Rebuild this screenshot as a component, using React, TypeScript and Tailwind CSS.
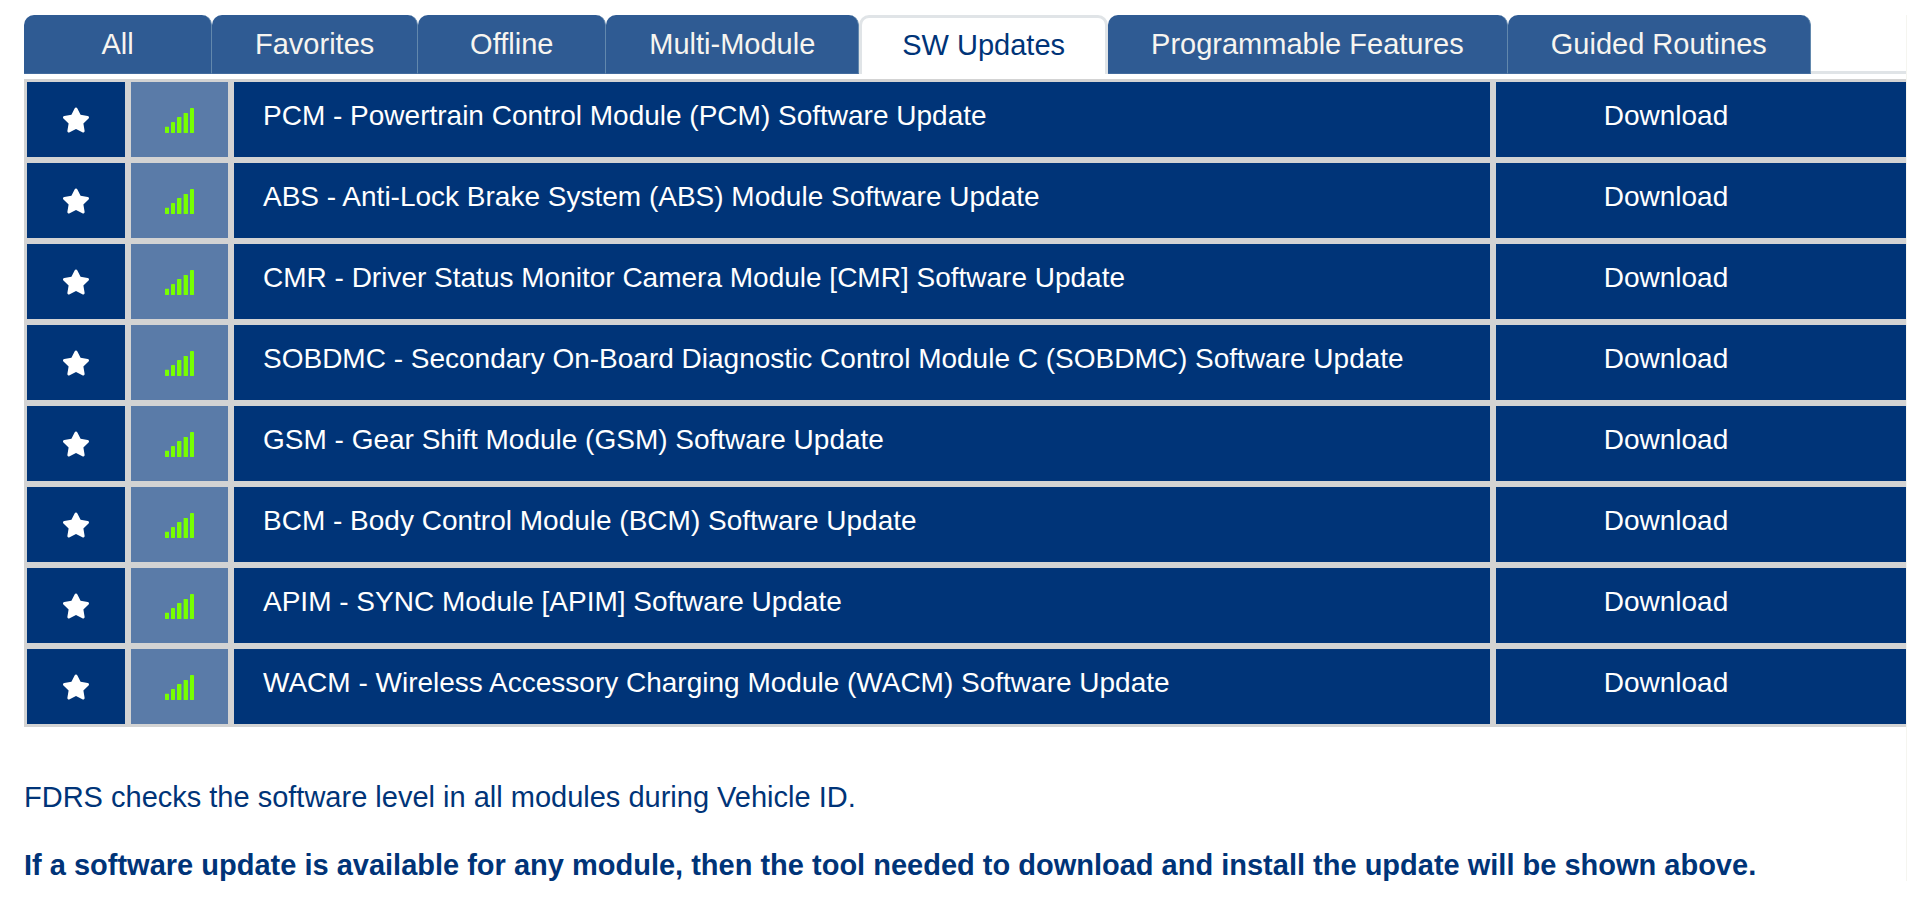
import { useState } from 'react';
import { FaStar } from 'react-icons/fa';

const tabs = [
  'All',
  'Favorites',
  'Offline',
  'Multi-Module',
  'SW Updates',
  'Programmable Features',
  'Guided Routines',
];

const updates = [
  'PCM - Powertrain Control Module (PCM) Software Update',
  'ABS - Anti-Lock Brake System (ABS) Module Software Update',
  'CMR - Driver Status Monitor Camera Module [CMR] Software Update',
  'SOBDMC - Secondary On-Board Diagnostic Control Module C (SOBDMC) Software Update',
  'GSM - Gear Shift Module (GSM) Software Update',
  'BCM - Body Control Module (BCM) Software Update',
  'APIM - SYNC Module [APIM] Software Update',
  'WACM - Wireless Accessory Charging Module (WACM) Software Update',
];

// Five rising bars, network required
function SignalIcon() {
  return (
    <svg width="29" height="25" viewBox="0 0 29 25" fill="#77ff00" className="mx-auto block">
      <rect x="0" y="18.7" width="4" height="6.3" rx="0.4" />
      <rect x="6" y="14" width="4" height="11" rx="0.4" />
      <rect x="12" y="9" width="4.4" height="16" rx="0.4" />
      <rect x="18.6" y="5" width="4.4" height="20" rx="0.4" />
      <rect x="25" y="0" width="4" height="25" rx="0.4" />
    </svg>
  );
}

export default function App() {
  const [activeTab, setActiveTab] = useState('SW Updates');

  return (
    <div className="min-h-screen bg-white pt-[15px] pl-6 font-['Liberation_Sans',Arial,sans-serif] text-[#003478]">
      <div className="border-r border-[#f5f5f0]">
        {/* Tabs */}
        <div role="tablist" className="flex text-[29px] leading-8">
          {tabs.map((tab) => (
            <button
              key={tab}
              type="button"
              role="tab"
              aria-selected={tab === activeTab}
              onClick={() => setActiveTab(tab)}
              className={`h-[59px] min-w-[188px] shrink-0 rounded-t-[10px] whitespace-nowrap ${
                tab === activeTab
                  ? 'border-x-3 border-t-3 border-[#e0e4e7] bg-white px-10 pb-[3px]'
                  : 'border-r border-b border-r-[#6288ad] border-b-[#426b9e] bg-[#2f5b93] px-[43px] text-[#f7f5f0]'
              }`}
            >
              {tab}
            </button>
          ))}
          <div className="grow border-b-3 border-[#e0e4e7]" />
        </div>

        {/* Update list */}
        <table className="mt-[5px] w-full table-fixed border-separate border-spacing-0 bg-[#003478] text-[28px] leading-8 text-white">
          <colgroup>
            <col className="w-[104px]" />
            <col className="w-[103px]" />
            <col />
            <col className="w-[413px]" />
          </colgroup>
          <tbody>
            {updates.map((name) => (
              <tr key={name} className="h-[81px]">
                <td className="border-3 border-[#d3d3d3] p-0">
                  <button type="button" aria-label="Add to favorites" className="mx-auto block">
                    <FaStar size={28} />
                  </button>
                </td>
                <td className="border-3 border-[#d3d3d3] bg-[#5a7ba8] px-0 pt-0.5 pb-0">
                  <SignalIcon />
                </td>
                <td className="border-3 border-[#d3d3d3] pr-4 pb-[7px] pl-[29px]">{name}</td>
                <td className="border-y-3 border-l-3 border-[#d3d3d3] pr-[70px] pb-[7px] text-center">
                  <button type="button">Download</button>
                </td>
              </tr>
            ))}
          </tbody>
        </table>

        {/* Notes */}
        <div className="space-y-9 pt-[54px] text-[29px] leading-8">
          <p>FDRS checks the software level in all modules during Vehicle ID.</p>
          <p className="font-bold">
            If a software update is available for any module, then the tool needed to download and
            install the update will be shown above.
          </p>
        </div>
      </div>
    </div>
  );
}
